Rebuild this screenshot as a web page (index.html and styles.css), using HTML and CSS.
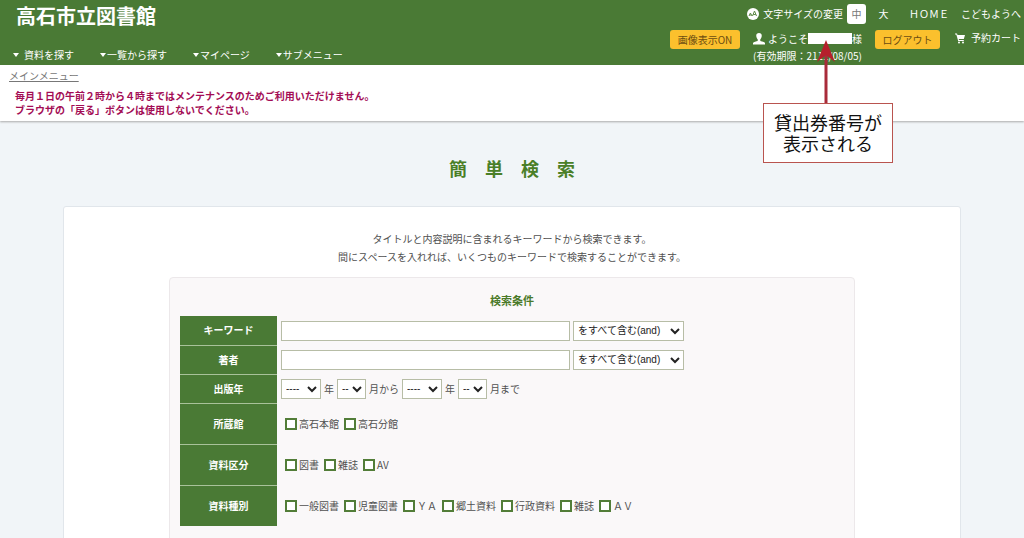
FILE: index.html
```html
<!DOCTYPE html>
<html lang="ja">
<head>
<meta charset="utf-8">
<title>高石市立図書館</title>
<link rel="stylesheet" href="styles.css">
</head>
<body>
<header class="site-header">
  <div class="brand">
    <div class="site-name">高石市立図書館</div>
    <nav class="main-nav">
      <a class="first" href="#">資料を探す</a>
      <a href="#">一覧から探す</a>
      <a href="#">マイページ</a>
      <a href="#">サブメニュー</a>
    </nav>
  </div>
  <div class="tools">
    <div class="tool-row">
      <div class="text-size">
        <svg width="12" height="12" viewBox="0 0 12 12" aria-hidden="true"><circle cx="6" cy="6" r="6" fill="#fff"/><path d="M2 8l1.4-3L5 8M2.5 7h2M5.5 8L7.5 3l2 5M6.2 6.5h2.6" fill="none" stroke="#5f8a48"/></svg>
        <span>文字サイズの変更</span>
        <button class="size current" type="button">中</button>
        <button class="size" type="button">大</button>
      </div>
      <a href="#">ＨＯＭＥ</a>
      <a href="#">こどもようへ</a>
    </div>
    <div class="tool-row account">
      <button class="action" type="button">画像表示ON</button>
      <div class="user">
        <div class="user-name">
          <svg width="12" height="12" viewBox="0 0 12 12" aria-hidden="true"><path d="M6 0c2 0 3 1.500 2.700 3.300C8.500 4.800 8 5.600 7.300 6.200v1.800c1.200.5 4.200.7 4.700 2v1.500H0V10c.5-1.300 3.500-1.500 4.700-2V6.200C4 5.600 3.500 4.800 3.300 3.300 3 1.500 4 0 6 0z" fill="#fff"/></svg>
          <span>ようこそ</span><span class="masked"></span><span>様</span>
        </div>
        <div>(有効期限：2111/08/05)</div>
      </div>
      <button class="action logout" type="button">ログアウト</button>
      <a class="cart" href="#">
        <svg width="10" height="11" viewBox="0 0 10 11" aria-hidden="true"><path d="M0 .5h2l.5 1.500H10L8.800 6H3.700l.3 1h4.800v1H3.200L1.300 1.500H0z" fill="#fff"/><circle cx="4" cy="9.500" r="1" fill="#fff"/><circle cx="8" cy="9.500" r="1" fill="#fff"/></svg>
        <span>予約カート</span>
      </a>
    </div>
  </div>
  <div class="callout">
    <svg width="24" height="64" viewBox="0 0 24 64" aria-hidden="true"><path d="M10 14v50" stroke="#a92b3a" stroke-width="3"/><path d="M10 1l9 22-9-7-9 7z" fill="#b5202c"/></svg>
    <p>貸出券番号が<br>表示される</p>
  </div>
</header>
<div class="notice">
  <a class="crumb" href="#">メインメニュー</a>
  <p>毎月１日の午前２時から４時まではメンテナンスのためご利用いただけません。<br>ブラウザの「戻る」ボタンは使用しないでください。</p>
</div>
<main>
  <h1>簡　単　検　索</h1>
  <section class="card">
    <p class="lead">タイトルと内容説明に含まれるキーワードから検索できます。<br>間にスペースを入れれば、いくつものキーワードで検索することができます。</p>
    <form class="panel">
      <h2>検索条件</h2>
      <table>
        <tr>
          <th scope="row"><label for="keyword">キーワード</label></th>
          <td><div class="fields"><input class="text" id="keyword" type="text"><select class="mode" aria-label="キーワードの条件"><option>をすべて含む(and)</option></select></div></td>
        </tr>
        <tr>
          <th scope="row"><label for="author">著者</label></th>
          <td><div class="fields"><input class="text" id="author" type="text"><select class="mode" aria-label="著者の条件"><option>をすべて含む(and)</option></select></div></td>
        </tr>
        <tr>
          <th scope="row">出版年</th>
          <td><div class="fields">
            <select class="year" id="y1"><option>----</option></select><label for="y1">年</label>
            <select class="month" id="m1"><option>--</option></select><label for="m1">月から</label>
            <select class="year" id="y2"><option>----</option></select><label for="y2">年</label>
            <select class="month" id="m2"><option>--</option></select><label for="m2">月まで</label>
          </div></td>
        </tr>
        <tr class="tall">
          <th scope="row">所蔵館</th>
          <td><div class="checks"><label><input type="checkbox">高石本館</label><label><input type="checkbox">高石分館</label></div></td>
        </tr>
        <tr class="tall">
          <th scope="row">資料区分</th>
          <td><div class="checks"><label><input type="checkbox">図書</label><label><input type="checkbox">雑誌</label><label><input type="checkbox">AV</label></div></td>
        </tr>
        <tr class="tall">
          <th scope="row">資料種別</th>
          <td><div class="checks"><label><input type="checkbox">一般図書</label><label><input type="checkbox">児童図書</label><label><input type="checkbox">ＹＡ</label><label><input type="checkbox">郷土資料</label><label><input type="checkbox">行政資料</label><label><input type="checkbox">雑誌</label><label><input type="checkbox">ＡＶ</label></div></td>
        </tr>
      </table>
    </form>
  </section>
</main>
</body>
</html>
```
FILE: styles.css
```css
* { box-sizing: border-box; }
body {
  margin: 0;
  background: #f1f5f8;
  color: #505050;
  font: 10px/14px "Noto Sans CJK JP", sans-serif;
}
p, h1, h2 { margin: 0; }
svg { display: block; flex: none; }
button, input, select { font: inherit; margin: 0; }

.site-header {
  position: relative;
  display: flex;
  justify-content: space-between;
  padding: 4px 3px 1px 13px;
  background: #4a7a35;
  color: #fff;
}
.site-header a { color: inherit; text-decoration: none; }
.brand {
  display: flex;
  flex-direction: column;
  justify-content: space-between;
  padding-bottom: 2px;
}
.site-name {
  padding-left: 3px;
  font-size: 20px;
  line-height: 24px;
  font-weight: 700;
}
.main-nav { display: flex; gap: 26px; }
.main-nav a { display: flex; align-items: center; gap: 1px; }
.main-nav .first { gap: 5px; }
.main-nav a::before {
  content: "";
  border: 3px solid transparent;
  border-top: 4px solid #fff;
  border-bottom: 0;
}
.tool-row {
  display: flex;
  justify-content: flex-end;
  align-items: center;
  gap: 12px;
}
.text-size {
  display: flex;
  align-items: center;
  gap: 4px;
  margin-right: 4px;
}
.size {
  width: 19px;
  height: 20px;
  padding: 0;
  border: 0;
  border-radius: 3px;
  background: none;
  color: #fff;
}
.size.current { background: #fff; color: #777; margin-right: 4px; }
.account { align-items: flex-start; gap: 13px; padding-top: 6px; }
.action {
  width: 70px;
  height: 19px;
  padding: 0;
  border: 0;
  border-radius: 3px;
  background: #fbc02d;
  color: #6b4d12;
}
.logout { width: 65px; }
.user { line-height: 17px; }
.user-name { display: flex; align-items: center; }
.user-name svg { margin-right: 3px; }
.masked { width: 44px; height: 11px; background: #fff; }
.cart { display: flex; align-items: center; gap: 6px; line-height: 16px; padding-left: 2px; }

.callout {
  position: absolute;
  z-index: 1;
  top: 39px;
  right: 131px;
  display: flex;
  flex-direction: column;
  align-items: center;
  color: #111;
}
.callout p {
  padding: 8px 10px;
  border: 1px solid #b9544f;
  background: #fff;
  font-size: 18px;
  line-height: 21px;
  text-align: center;
}

.notice {
  padding: 4px 9px;
  background: #fff;
  box-shadow: 0 1px 2px #aaa;
}
.crumb { color: #777; }
.notice p {
  padding: 6px 6px 0;
  color: #a30d55;
  font-weight: 700;
}

h1 {
  padding: 35px 0 26px;
  color: #4a7f27;
  font-size: 18px;
  line-height: 24px;
  text-align: center;
}
.card {
  margin: 0 63px;
  padding: 23px 105px 0;
  border: 1px solid #e1e6eb;
  border-radius: 3px;
  background: #fff;
}
.lead { line-height: 18px; text-align: center; }
.panel {
  margin-top: 11px;
  padding: 14px 10px 20px;
  border: 1px solid #ece8ea;
  border-radius: 4px;
  background: #faf8f9;
}
h2 {
  padding-bottom: 8px;
  color: #4a7a2a;
  font-size: 11px;
  line-height: 16px;
  text-align: center;
}
table { width: 100%; border-collapse: collapse; }
th, td { height: 29px; padding: 0; }
.tall th, .tall td { height: 41px; }
th {
  width: 97px;
  border-bottom: 1px solid #a9c29a;
  background: #4a7a35;
  color: #fff;
}
tr:last-child th { border-bottom: 0; }
td { padding-left: 4px; }
.fields { display: flex; align-items: center; gap: 3px; }
.text, select {
  height: 20px;
  border: 1px solid #b7bda6;
  border-radius: 0;
  background-color: #fff;
  color: #222;
}
.text { width: 289px; padding: 0 4px; }
select { padding: 0; font-family: "Liberation Sans", "Noto Sans CJK JP", sans-serif; }
.mode { width: 111px; }
.year { width: 40px; }
.month { width: 29px; }
.checks { display: flex; gap: 5px; padding-left: 4px; }
.checks label { display: flex; align-items: center; gap: 2px; }
.checks input {
  appearance: none;
  width: 12px;
  height: 12px;
  border: 2px solid #527d38;
  background: #fff;
}
.checks input:checked { background: #527d38; }
```
